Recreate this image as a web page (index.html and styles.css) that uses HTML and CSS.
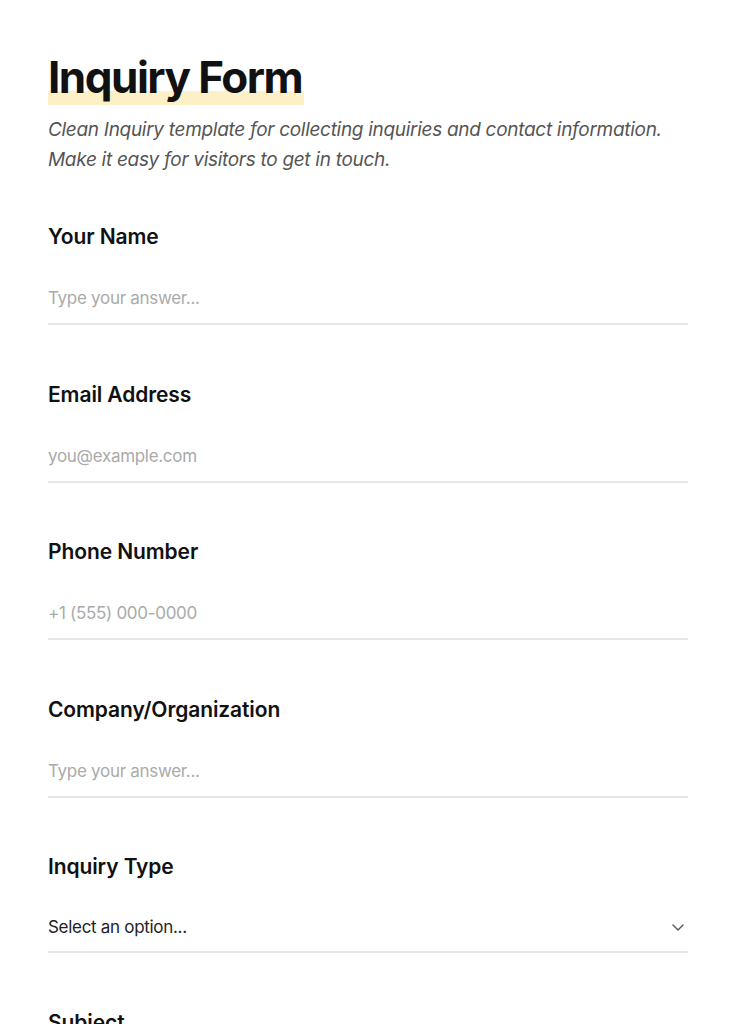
FILE: index.html
```html
<!DOCTYPE html>
<html lang="en">
<head>
    <meta charset="UTF-8">
    <meta name="viewport" content="width=device-width, initial-scale=1.0">
    <title>Inquiry Form</title>
    <link rel="stylesheet" href="styles.css">
</head>
<body>
    <div class="page">
        <h1 class="title"><span class="mark">Inquiry Form</span></h1>
        <p class="intro">Clean Inquiry template for collecting inquiries and contact information. Make it easy for visitors to get in touch.</p>

        <form class="form">
            <div class="field">
                <label class="label" for="name">Your Name</label>
                <input class="input" id="name" type="text" placeholder="Type your answer...">
            </div>
            <div class="field">
                <label class="label" for="email">Email Address</label>
                <input class="input" id="email" type="email" placeholder="you@example.com">
            </div>
            <div class="field">
                <label class="label" for="phone">Phone Number</label>
                <input class="input" id="phone" type="tel" placeholder="+1 (555) 000-0000">
            </div>
            <div class="field">
                <label class="label" for="company">Company/Organization</label>
                <input class="input" id="company" type="text" placeholder="Type your answer...">
            </div>
            <div class="field">
                <label class="label" for="type">Inquiry Type</label>
                <div class="select">
                    <span>Select an option...</span>
                    <svg width="14" height="14" viewBox="0 0 14 14"><path d="M2 5l5 5 5-5" fill="none" stroke="#555" stroke-width="1.4" stroke-linecap="round" stroke-linejoin="round"/></svg>
                </div>
            </div>
            <div class="field">
                <label class="label" for="subject">Subject</label>
                <input class="input" id="subject" type="text" placeholder="Type your answer...">
            </div>
        </form>
    </div>
</body>
</html>
```

FILE: styles.css
```css
body {
    margin: 0;
    background: #fff;
    color: #111;
    font-family: Inter, "Noto Sans", sans-serif;
}

.page {
    padding: 50px 48px 40px;
}

.title {
    margin: 0;
    font-size: 44px;
    line-height: 54px;
    font-weight: 700;
    letter-spacing: -1.5px;
}

.mark {
    display: inline-block;
    background: linear-gradient(transparent 74%, #fdf0c6 74%);
    padding: 0 2px 1px 0;
}

.intro {
    margin: 10px 0 0;
    font-size: 19px;
    line-height: 30px;
    font-style: italic;
    color: #555;
    letter-spacing: -0.3px;
}

.form {
    margin-top: 47px;
}

.field {
    margin-bottom: 54.5px;
}

.label {
    display: block;
    font-size: 21px;
    line-height: 30px;
    font-weight: 600;
    letter-spacing: -0.1px;
    margin-bottom: 23px;
}

.input,
.select {
    display: block;
    box-sizing: border-box;
    width: 100%;
    height: 50px;
    border: 0;
    border-bottom: 2px solid #e6e6e6;
    padding: 10px 0 12px;
    font-family: inherit;
    font-size: 17px;
    line-height: 26px;
    letter-spacing: -0.3px;
    outline: none;
    background: none;
    color: #222;
}

.input::placeholder {
    color: #aaa;
}

.select {
    display: flex;
    justify-content: space-between;
    align-items: center;
    height: 48px;
}

.select svg {
    margin-right: 3px;
}
```
